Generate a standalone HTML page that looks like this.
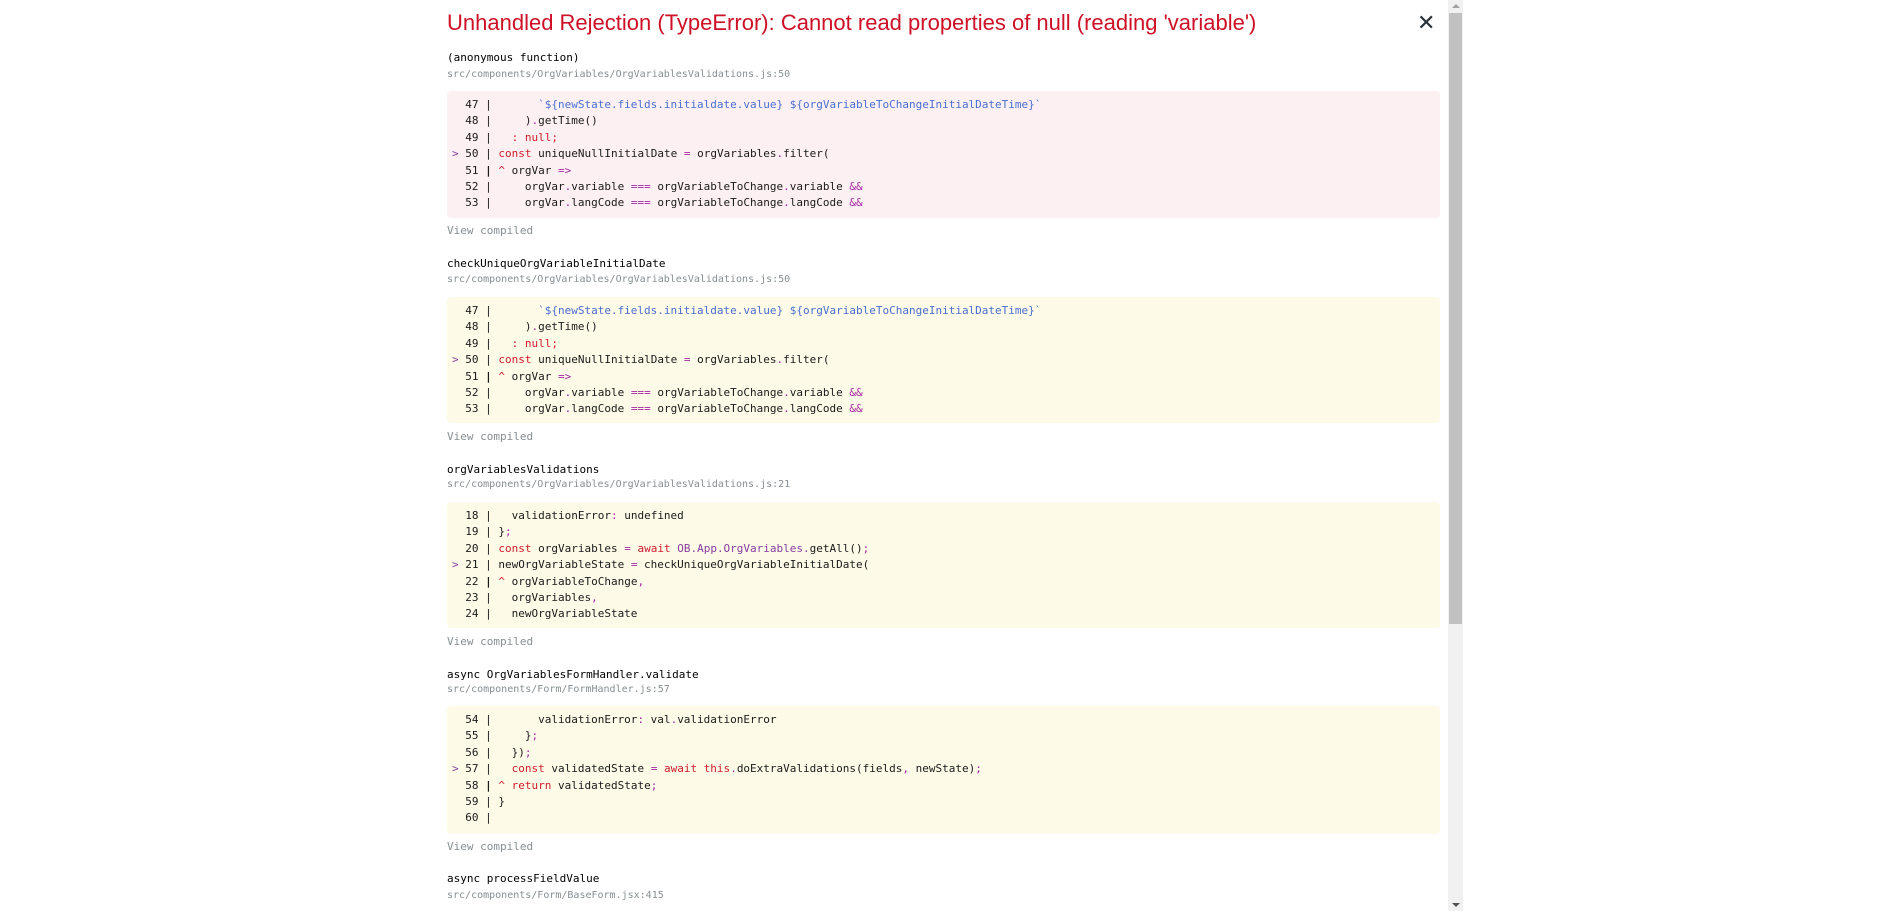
<!DOCTYPE html>
<html><head><meta charset="utf-8"><style>
html,body{margin:0;padding:0;background:#fff;width:1900px;height:911px;overflow:hidden;}
.wrap{position:absolute;left:447px;top:0;width:993px;}
.title{position:absolute;left:0;top:9px;font:22px/28px "Liberation Sans",sans-serif;color:#ce1126;white-space:nowrap;}
.close{position:absolute;left:970px;top:11px;font:bold 22px/26px "DejaVu Sans",sans-serif;color:#293238;}
.mono{font-family:"DejaVu Sans Mono","Liberation Mono",monospace;font-size:11px;}
.h{position:absolute;left:0;color:#000;white-space:pre;}
.f{position:absolute;left:0;color:#878e91;white-space:pre;font-size:10px;}
.vc{position:absolute;left:0;color:#878e91;white-space:pre;}
.box{position:absolute;left:0;width:993px;border-radius:4px;padding:6px 0 0 5px;box-sizing:border-box;white-space:pre;line-height:16.4px;color:#1a1a1a;}
.pink{background:#fcf0f2;}
.yel{background:#fdfae8;}
.k{color:#d01c2c;}
.o{color:#a626a4;}
.s{color:#4a6ed0;}
.g{color:#8a3ca0;}
.sb{position:absolute;left:1448px;top:0;width:15px;height:911px;background:#f1f1f1;}
.th{position:absolute;left:1px;top:13px;width:13px;height:611px;background:#c1c1c1;}
</style></head><body>
<div class="wrap">
<div class="title">Unhandled Rejection (TypeError): Cannot read properties of null (reading 'variable')</div>
<div class="close">✕</div>

<div class="mono h" style="top:51px">(anonymous function)</div>
<div class="mono f" style="top:69px">src/components/OrgVariables/OrgVariablesValidations.js:50</div>
<div class="mono box pink" style="top:91px;height:127px">  47 |       <span class="s">`${newState.fields.initialdate.value} ${orgVariableToChangeInitialDateTime}`</span>
  48 |     )<span class="o">.</span>getTime()
  49 |   <span class="k">: null;</span>
<span class="g">&gt;</span> 50 | <span class="k">const</span> uniqueNullInitialDate <span class="o">=</span> orgVariables<span class="o">.</span>filter(
  51 <b>|</b> <span class="k">^</span> orgVar <span class="o">=&gt;</span>
  52 |     orgVar<span class="o">.</span>variable <span class="o">===</span> orgVariableToChange<span class="o">.</span>variable <span class="o">&amp;&amp;</span>
  53 |     orgVar<span class="o">.</span>langCode <span class="o">===</span> orgVariableToChange<span class="o">.</span>langCode <span class="o">&amp;&amp;</span></div>
<div class="mono vc" style="top:224px">View compiled</div>

<div class="mono h" style="top:257px">checkUniqueOrgVariableInitialDate</div>
<div class="mono f" style="top:274px">src/components/OrgVariables/OrgVariablesValidations.js:50</div>
<div class="mono box yel" style="top:297px;height:126px">  47 |       <span class="s">`${newState.fields.initialdate.value} ${orgVariableToChangeInitialDateTime}`</span>
  48 |     )<span class="o">.</span>getTime()
  49 |   <span class="k">: null;</span>
<span class="g">&gt;</span> 50 | <span class="k">const</span> uniqueNullInitialDate <span class="o">=</span> orgVariables<span class="o">.</span>filter(
  51 <b>|</b> <span class="k">^</span> orgVar <span class="o">=&gt;</span>
  52 |     orgVar<span class="o">.</span>variable <span class="o">===</span> orgVariableToChange<span class="o">.</span>variable <span class="o">&amp;&amp;</span>
  53 |     orgVar<span class="o">.</span>langCode <span class="o">===</span> orgVariableToChange<span class="o">.</span>langCode <span class="o">&amp;&amp;</span></div>
<div class="mono vc" style="top:430px">View compiled</div>

<div class="mono h" style="top:463px">orgVariablesValidations</div>
<div class="mono f" style="top:479px">src/components/OrgVariables/OrgVariablesValidations.js:21</div>
<div class="mono box yel" style="top:502px;height:126px">  18 |   validationError<span class="o">:</span> undefined
  19 | }<span class="o">;</span>
  20 | <span class="k">const</span> orgVariables <span class="o">=</span> <span class="k">await</span> <span class="g">OB.App.OrgVariables.</span>getAll()<span class="o">;</span>
<span class="g">&gt;</span> 21 | newOrgVariableState <span class="o">=</span> checkUniqueOrgVariableInitialDate(
  22 <b>|</b> <span class="k">^</span> orgVariableToChange<span class="o">,</span>
  23 |   orgVariables<span class="o">,</span>
  24 |   newOrgVariableState</div>
<div class="mono vc" style="top:635px">View compiled</div>

<div class="mono h" style="top:668px">async OrgVariablesFormHandler.validate</div>
<div class="mono f" style="top:684px">src/components/Form/FormHandler.js:57</div>
<div class="mono box yel" style="top:706px;height:128px">  54 |       validationError<span class="o">:</span> val<span class="o">.</span>validationError
  55 |     }<span class="o">;</span>
  56 |   })<span class="o">;</span>
<span class="g">&gt;</span> 57 |   <span class="k">const</span> validatedState <span class="o">=</span> <span class="k">await this</span><span class="o">.</span>doExtraValidations(fields<span class="o">,</span> newState)<span class="o">;</span>
  58 <b>|</b> <span class="k">^</span> <span class="k">return</span> validatedState<span class="o">;</span>
  59 | }
  60 |</div>
<div class="mono vc" style="top:840px">View compiled</div>

<div class="mono h" style="top:872px">async processFieldValue</div>
<div class="mono f" style="top:890px">src/components/Form/BaseForm.jsx:415</div>
</div>
<div class="sb"><div class="th"></div>
<div style="position:absolute;left:4px;top:4px;width:0;height:0;border-left:4px solid transparent;border-right:4px solid transparent;border-bottom:4px solid #a3a3a3"></div>
<div style="position:absolute;left:4px;top:903px;width:0;height:0;border-left:4px solid transparent;border-right:4px solid transparent;border-top:4px solid #505050"></div>
</div>
</body></html>
